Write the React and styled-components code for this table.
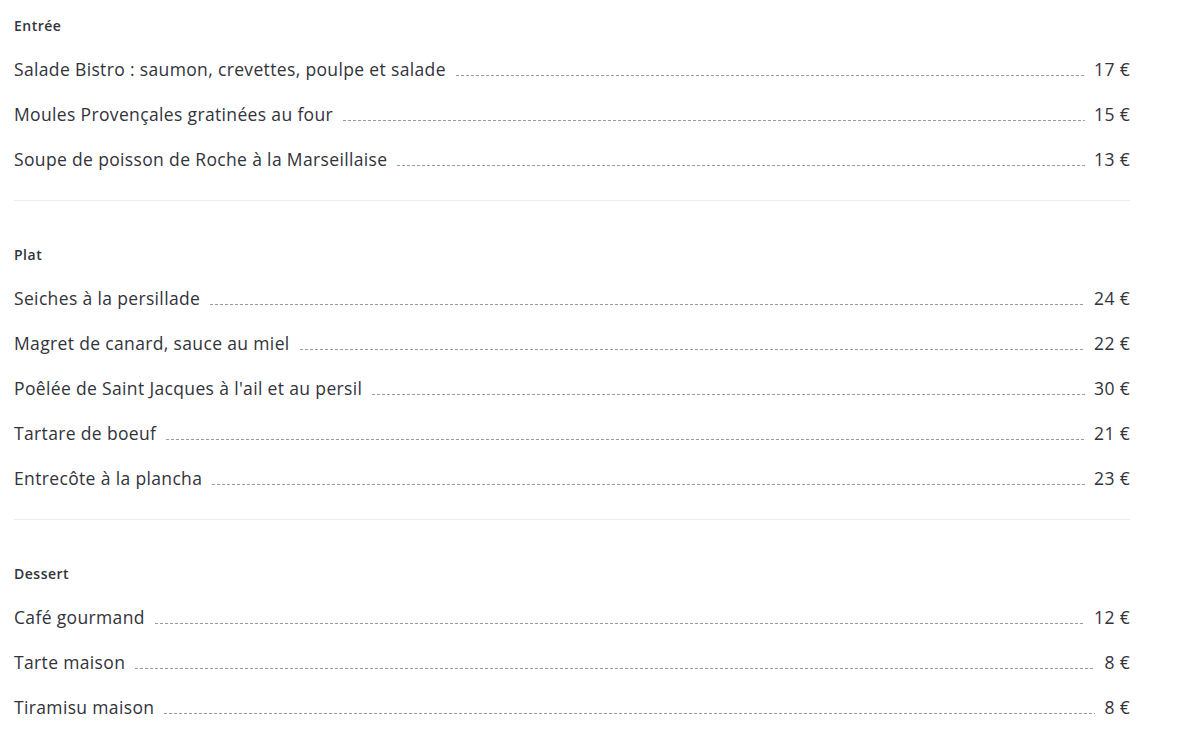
import React from 'react';
import styled, { createGlobalStyle } from 'styled-components';

const GlobalStyle = createGlobalStyle`
  body {
    margin: 0;
    background: #fff;
    font-family: "Open Sans", Lato, sans-serif;
    color: #32333b;
  }
`;

const Menu = styled.div`
  width: 1116px;
  padding: 0 0 0 14px;
`;

const Section = styled.section`
  padding: 17px 0 18px;
  border-bottom: ${props => (props.last ? 'none' : '1px solid #ececec')};
  & + & {
    padding-top: 45px;
  }
`;

const Title = styled.h3`
  margin: 0 0 12px;
  font-size: 14px;
  font-weight: 600;
  line-height: 18px;
  letter-spacing: 0.5px;
  color: #32333b;
`;

const Row = styled.div`
  display: flex;
  align-items: baseline;
  height: 45px;
  line-height: 45px;
  font-size: 17.5px;
  letter-spacing: 0.35px;
`;

const Name = styled.span`
  flex: none;
  font-weight: 500;
`;

const Leader = styled.span`
  flex: 1;
  height: 1px;
  margin: 0 9px 0 10px;
  background: repeating-linear-gradient(to right, #9a9aa3 0 3px, transparent 3px 5px);
`;

const Price = styled.span`
  flex: none;
  font-weight: 500;
`;

const menu = [
  {
    title: 'Entrée',
    items: [
      ['Salade Bistro : saumon, crevettes, poulpe et salade', '17 €'],
      ['Moules Provençales gratinées au four', '15 €'],
      ['Soupe de poisson de Roche à la Marseillaise', '13 €'],
    ],
  },
  {
    title: 'Plat',
    items: [
      ['Seiches à la persillade', '24 €'],
      ['Magret de canard, sauce au miel', '22 €'],
      ["Poêlée de Saint Jacques à l'ail et au persil", '30 €'],
      ['Tartare de boeuf', '21 €'],
      ['Entrecôte à la plancha', '23 €'],
    ],
  },
  {
    title: 'Dessert',
    items: [
      ['Café gourmand', '12 €'],
      ['Tarte maison', '8 €'],
      ['Tiramisu maison', '8 €'],
    ],
  },
];

const App = () => (
  <>
    <GlobalStyle />
    <Menu>
      {menu.map((section, i) => (
        <Section key={section.title} last={i === menu.length - 1}>
          <Title>{section.title}</Title>
          {section.items.map(([name, price]) => (
            <Row key={name}>
              <Name>{name}</Name>
              <Leader />
              <Price>{price}</Price>
            </Row>
          ))}
        </Section>
      ))}
    </Menu>
  </>
);

export default App;
